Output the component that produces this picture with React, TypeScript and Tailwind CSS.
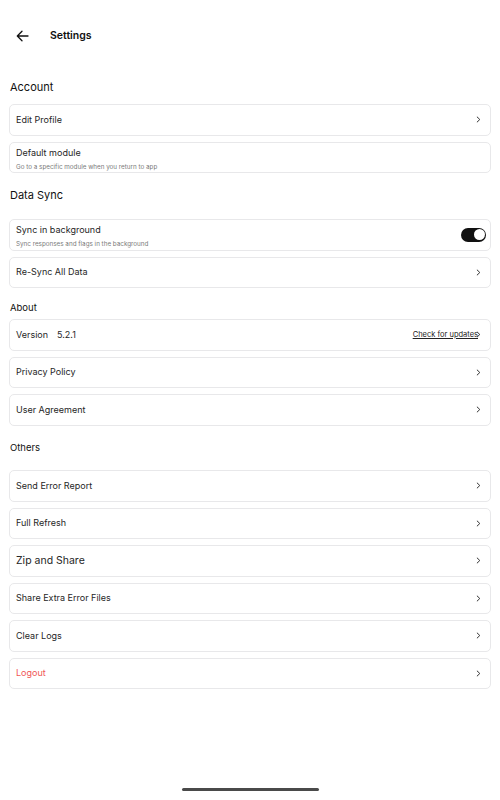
import React from "react";

type Row = {
  title: string;
  sub?: string;
  right?: "chevron" | "toggle" | "none" | "update";
  extra?: string;
  big?: boolean;
  danger?: boolean;
};

function Chevron() {
  return (
    <svg width="5" height="7" viewBox="0 0 5 7" fill="none" className="shrink-0">
      <path d="M1.2 1 L3.8 3.5 L1.2 6" stroke="#333" strokeWidth="1" strokeLinecap="round" strokeLinejoin="round" />
    </svg>
  );
}

function Toggle() {
  return (
    <div className="w-[25px] h-[14px] rounded-full bg-[#111] flex items-center justify-end pr-[1.5px]">
      <div className="w-[11px] h-[11px] rounded-full bg-white" />
    </div>
  );
}

function Card({ row }: { row: Row }) {
  return (
    <div className="h-[31.5px] mx-[9px] border border-[#e8e8ea] rounded-[5px] bg-white flex items-center pl-[6px] pr-[9px]">
      <div className={`flex-1 flex flex-col justify-center min-w-0 ${row.sub ? "pt-[3px]" : ""}`}>
        <div className="flex items-center">
          <span
            className={`${row.big ? "text-[10.5px]" : "text-[9px]"} leading-[12px] ${
              row.danger ? "text-[#f05656]" : "text-[#262626]"
            }`}
          >
            {row.title}
          </span>
          {row.extra && (
            <span className="text-[9px] leading-[12px] text-[#262626] ml-[9px]">{row.extra}</span>
          )}
        </div>
        {row.sub && (
          <span className="text-[6.3px] leading-[7px] text-[#7a7a7a] mt-[5px]">{row.sub}</span>
        )}
      </div>
      {row.right === "chevron" && <Chevron />}
      {row.right === "toggle" && <div className="-mr-[5px]"><Toggle /></div>}
      {row.right === "update" && (
        <div className="flex items-center">
          <span className="text-[7.5px] leading-[10px] text-[#222] underline">Check for updates</span>
          <div className="-ml-[2px]"><Chevron /></div>
        </div>
      )}
    </div>
  );
}

function Section({ title, rows, size, mt, mb }: { title: string; rows: Row[]; size: "lg" | "sm"; mt: string; mb: string }) {
  return (
    <div>
      <div
        className={`${mt} ${mb} px-[10px] text-[#111] ${
          size === "lg" ? "text-[11px] leading-[14px]" : "text-[9.5px] leading-[13px]"
        }`}
      >
        {title}
      </div>
      <div className="flex flex-col gap-[6px]">
        {rows.map((r) => (
          <Card key={r.title} row={r} />
        ))}
      </div>
    </div>
  );
}

export default function App() {
  return (
    <div className="w-[500px] h-[800px] bg-white relative overflow-hidden" style={{ fontFamily: "Inter, 'Noto Sans', sans-serif" }}>
      <div className="pt-[27px] h-[44px] flex items-center pl-[16px]">
        <svg width="13" height="12" viewBox="0 0 13 12" fill="none">
          <path d="M12 6 H1.5 M6 1.3 L1.3 6 L6 10.7" stroke="#111" strokeWidth="1.3" strokeLinecap="round" strokeLinejoin="round" />
        </svg>
        <span className="ml-[21px] text-[10.5px] font-semibold text-[#111]">Settings</span>
      </div>

      <Section
        title="Account"
        size="lg"
        mt="mt-[36px]"
        mb="mb-[10px]"
        rows={[
          { title: "Edit Profile", right: "chevron" },
          { title: "Default module", sub: "Go to a specific module when you return to app", right: "none" },
        ]}
      />
      <Section
        title="Data Sync"
        size="lg"
        mt="mt-[15px]"
        mb="mb-[17px]"
        rows={[
          { title: "Sync in background", sub: "Sync responses and flags in the background", right: "toggle" },
          { title: "Re-Sync All Data", right: "chevron" },
        ]}
      />
      <Section
        title="About"
        size="sm"
        mt="mt-[12.5px]"
        mb="mb-[5.5px]"
        rows={[
          { title: "Version", extra: "5.2.1", right: "update" },
          { title: "Privacy Policy", right: "chevron" },
          { title: "User Agreement", right: "chevron" },
        ]}
      />
      <Section
        title="Others"
        size="sm"
        mt="mt-[15px]"
        mb="mb-[16.5px]"
        rows={[
          { title: "Send Error Report", right: "chevron" },
          { title: "Full Refresh", right: "chevron" },
          { title: "Zip and Share", right: "chevron", big: true },
          { title: "Share Extra Error Files", right: "chevron" },
          { title: "Clear Logs", right: "chevron" },
          { title: "Logout", right: "chevron", danger: true },
        ]}
      />

      <div className="absolute left-[182px] top-[788px] w-[137px] h-[3px] rounded-full bg-[#4a4a4a]" />
    </div>
  );
}
